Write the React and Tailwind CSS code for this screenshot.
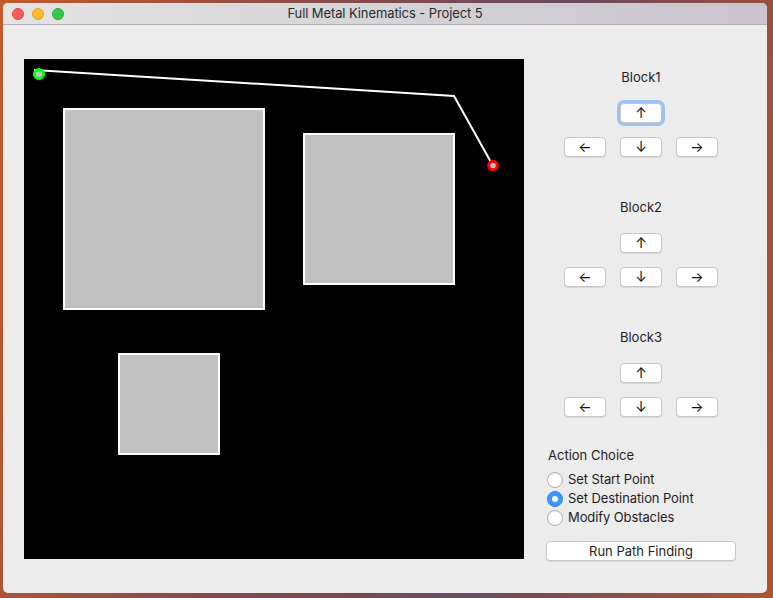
import React from "react";

const obstacles = [
  { x: 40, y: 50, size: 200 },
  { x: 280, y: 75, size: 150 },
  { x: 95, y: 295, size: 100 },
];

const pathPoints = "10,11 430,37 468,105";

function ArrowButton({ label, focused }) {
  return (
    <button
      className={
        "w-[42px] h-5 rounded-[4px] bg-white border border-[#c6c6c6] shadow-[0_1px_0_rgba(0,0,0,0.08)] flex items-center justify-center text-[14px] leading-none text-[#111111] " +
        (focused ? "ring-[3px] ring-[#9ec3f2]" : "")
      }
    >
      {label}
    </button>
  );
}

function BlockControls({ name, first }) {
  return (
    <div className={"flex flex-col items-center " + (first ? "" : "mt-[42px]")}>
      <div className="h-4 leading-4 text-[13px] text-[#1e1e1e]">{name}</div>
      <div className="mt-[18px]">
        <ArrowButton label="↑" focused={first} />
      </div>
      <div className="mt-[14px] flex gap-[14px]">
        <ArrowButton label="←" />
        <ArrowButton label="↓" />
        <ArrowButton label="→" />
      </div>
    </div>
  );
}

function Radio({ label, checked }) {
  return (
    <div className="h-[19px] flex items-center gap-[5px]">
      {checked ? (
        <span className="w-4 h-4 rounded-full bg-[#3c97fb] border border-[#2f84e6] flex items-center justify-center">
          <span className="w-[6px] h-[6px] rounded-full bg-white" />
        </span>
      ) : (
        <span className="w-4 h-4 rounded-full bg-white border border-[#b0b0b0] shadow-[inset_0_1px_1px_rgba(0,0,0,0.08)]" />
      )}
      <span className="text-[13px] tracking-[-0.1px] text-[#1e1e1e]">{label}</span>
    </div>
  );
}

export default function App() {
  return (
    <div
      className="w-[773px] h-[598px] overflow-hidden pt-[3px] pl-[3px] bg-[linear-gradient(100deg,#c25a2c_0%,#8a4a48_35%,#6a4a60_65%,#b0552e_100%)]"
      style={{ fontFamily: "Inter, 'Noto Sans', sans-serif" }}
    >
      <div className="w-[764px] h-[590px] rounded-[5px] bg-[#ececec] flex flex-col overflow-hidden">
        <div className="h-[22px] shrink-0 relative flex items-center justify-center border-b border-[#b3aeb5] bg-[linear-gradient(90deg,#e4e4e4_0%,#d6d5d7_45%,#cbc4cf_100%)]">
          <div className="absolute left-[9px] top-[5px] flex gap-[8px]">
            <span className="w-3 h-3 rounded-full bg-[#fc5b57] border border-[#e2463f]" />
            <span className="w-3 h-3 rounded-full bg-[#fdbc2e] border border-[#e1a116]" />
            <span className="w-3 h-3 rounded-full bg-[#34c84a] border border-[#27aa35]" />
          </div>
          <span className="text-[13px] tracking-[-0.1px] text-[#2a2a2a]">Full Metal Kinematics - Project 5</span>
        </div>

        <div className="flex pl-[21px] pt-[34px]">
          <svg width="500" height="500" className="bg-black shrink-0 block">
            {obstacles.map((o, i) => (
              <rect
                key={i}
                x={o.x}
                y={o.y}
                width={o.size}
                height={o.size}
                fill="#c0c0c0"
                stroke="#ffffff"
                strokeWidth="2"
              />
            ))}
            <polyline points={pathPoints} fill="none" stroke="#ffffff" strokeWidth="2" />
            <circle cx="15" cy="15" r="4.6" fill="#c0c0c0" stroke="#00ff00" strokeWidth="3" />
            <circle cx="469" cy="106.5" r="4.3" fill="#c0c0c0" stroke="#ff0000" strokeWidth="3" />
          </svg>

          <div className="ml-[22px] w-[190px] flex flex-col pt-[10px]">
            <BlockControls name="Block1" first />
            <BlockControls name="Block2" />
            <BlockControls name="Block3" />

            <div className="mt-[30px] pl-[2px] h-4 leading-4 text-[13px] text-[#1e1e1e]">Action Choice</div>
            <div className="mt-[7px] flex flex-col pl-[1px]">
              <Radio label="Set Start Point" />
              <Radio label="Set Destination Point" checked />
              <Radio label="Modify Obstacles" />
            </div>
            <button className="mt-[14px] h-5 w-[190px] rounded-[4px] bg-white border border-[#c6c6c6] shadow-[0_1px_0_rgba(0,0,0,0.08)] text-[13px] leading-none text-[#1e1e1e]">
              Run Path Finding
            </button>
          </div>
        </div>
      </div>
    </div>
  );
}
